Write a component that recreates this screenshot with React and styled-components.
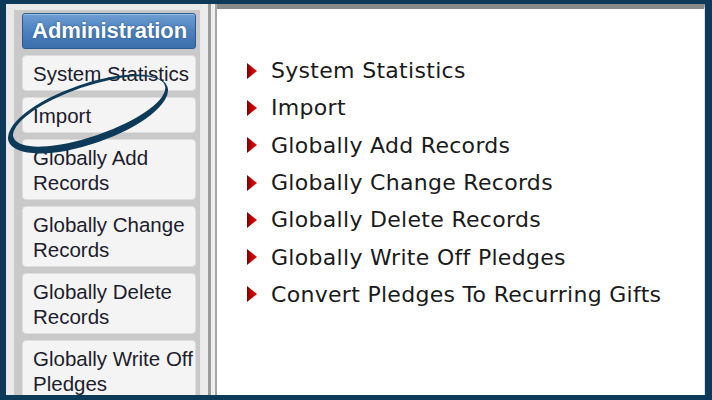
import React from "react";
import styled, { createGlobalStyle } from "styled-components";

const GlobalStyle = createGlobalStyle`
  html, body {
    margin: 0;
    padding: 0;
    background: #0d3a58;
  }
`;

const sideItems = [
  ["System Statistics"],
  ["Import"],
  ["Globally Add", "Records"],
  ["Globally Change", "Records"],
  ["Globally Delete", "Records"],
  ["Globally Write Off", "Pledges"],
];

const taskItems = [
  "System Statistics",
  "Import",
  "Globally Add Records",
  "Globally Change Records",
  "Globally Delete Records",
  "Globally Write Off Pledges",
  "Convert Pledges To Recurring Gifts",
];

export default function App() {
  return (
    <>
      <GlobalStyle />
      <Frame>
        <Sidebar>
          <Well>
            <HeaderButton>Administration</HeaderButton>
            {sideItems.map((lines) => (
              <NavButton key={lines.join(" ")}>
                {lines.map((l) => (
                  <span key={l}>{l}</span>
                ))}
              </NavButton>
            ))}
          </Well>
        </Sidebar>
        <Splitter />
        <Content>
          <TaskList>
            {taskItems.map((t) => (
              <Task key={t}>
                <Arrow />
                {t}
              </Task>
            ))}
          </TaskList>
        </Content>
        <Circle />
      </Frame>
    </>
  );
}

function Arrow() {
  return (
    <svg width="10" height="16" viewBox="0 0 10 16">
      <defs>
        <linearGradient id="arrowFill" x1="0" y1="0" x2="1" y2="0">
          <stop offset="0" stopColor="#7a0000" />
          <stop offset="0.5" stopColor="#c80000" />
          <stop offset="1" stopColor="#e01010" />
        </linearGradient>
      </defs>
      <polygon points="0,0 10,8 0,16" fill="url(#arrowFill)" />
    </svg>
  );
}

// hand drawn ring around "Import" – outer minus shifted inner ellipse gives the pen weight
function Circle() {
  return (
    <Overlay width="712" height="400" viewBox="0 0 712 400">
      <g transform="translate(88 114) rotate(-19)">
        <path
          fillRule="evenodd"
          fill="#0d3a58"
          d="M -84 0 a 84 30 0 1 0 168 0 a 84 30 0 1 0 -168 0 Z
             M -78 -2 a 80 25 0 1 0 160 0 a 80 25 0 1 0 -160 0 Z"
        />
      </g>
    </Overlay>
  );
}

const Frame = styled.div`
  position: relative;
  width: 712px;
  height: 400px;
  box-sizing: border-box;
  padding: 4px 7px 5px 6px;
  display: grid;
  grid-template-columns: 196px 15px 1fr;
  overflow: hidden;
  background: #0d3a58;
`;

const Sidebar = styled.div`
  background: #e9e9e9;
  padding: 6px 2px 0 8px;
  overflow: hidden;
`;

const Well = styled.div`
  height: 100%;
  box-sizing: border-box;
  background: #c9c9c9;
  padding: 3px 4px 0 8px;
  display: flex;
  flex-direction: column;
  gap: 6px;
`;

const HeaderButton = styled.div`
  flex-shrink: 0;
  height: 36px;
  box-sizing: border-box;
  border: 1px solid #2b5b8c;
  border-radius: 3px;
  background: linear-gradient(#6d9dd2, #4a7fbd 55%, #3c6fab);
  box-shadow: inset 0 1px 0 #9cc0e6;
  color: #ffffff;
  font-family: "Liberation Sans", Arial, sans-serif;
  font-weight: bold;
  font-size: 22px;
  line-height: 34px;
  padding: 0 9px;
  text-shadow: 0 0 2px #2a4f7a;
  white-space: nowrap;
  overflow: hidden;
`;

const NavButton = styled.div`
  flex-shrink: 0;
  display: flex;
  flex-direction: column;
  background: #f4f4f4;
  border: 1px solid #dedede;
  border-radius: 4px;
  padding: 5px 10px 4px;
  color: #1c1c2c;
  font-family: "Liberation Sans", Arial, sans-serif;
  font-size: 20.5px;
  line-height: 25px;
  white-space: nowrap;
`;

const Splitter = styled.div`
  background: linear-gradient(
    to right,
    #ececec 0 6px,
    #9c9c9c 6px 9px,
    #eeeeee 9px 13px,
    #a6a6a6 13px
  );
`;

const Content = styled.div`
  background: #ffffff;
  border-top: 5px solid #8a8a8a;
  border-right: 1px solid #d6e4f0;
  padding: 43px 0 0 30px;
`;

const TaskList = styled.div`
  display: flex;
  flex-direction: column;
`;

const Task = styled.div`
  display: flex;
  align-items: center;
  gap: 14px;
  height: 37.3px;
  color: #1a1a1a;
  font-family: "DejaVu Sans", Verdana, sans-serif;
  font-size: 22px;
  letter-spacing: 0.3px;
  white-space: nowrap;
`;

const Overlay = styled.svg`
  position: absolute;
  left: 0;
  top: 0;
  pointer-events: none;
`;
